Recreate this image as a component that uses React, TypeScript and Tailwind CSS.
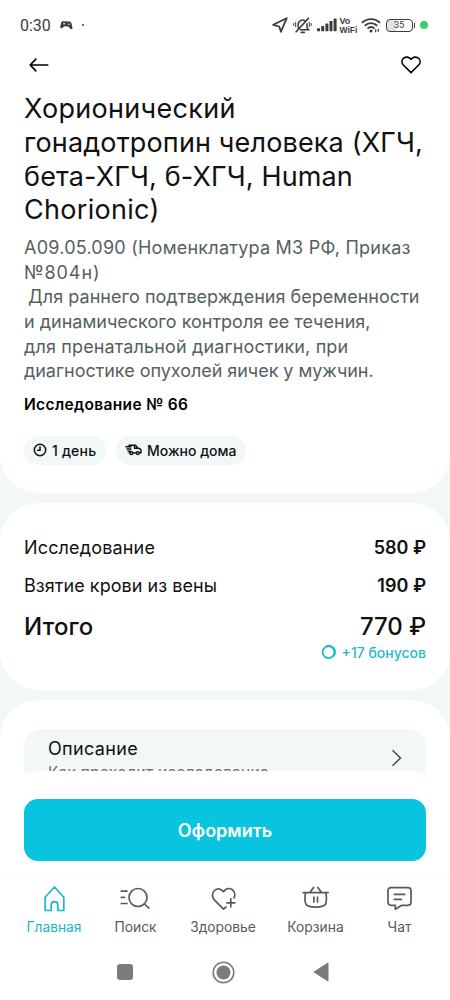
import React from 'react';
import clsx from 'clsx';

const titleLines = [
  { text: 'Хорионический', track: 'tracking-[0.3px]' },
  { text: 'гонадотропин человека (ХГЧ,', track: 'tracking-[0.15px]' },
  { text: 'бета-ХГЧ, б-ХГЧ, Human', track: 'tracking-[0.14px]' },
  { text: 'Chorionic)', track: 'tracking-[0.3px]' },
];

const descriptionLines = [
  { text: 'A09.05.090 (Номенклатура МЗ РФ, Приказ', track: 'tracking-[0.23px]' },
  { text: '№804н)', track: 'tracking-[0.9px]' },
  { text: ' Для раннего подтверждения беременности', track: '-ml-px tracking-[0.02px]' },
  { text: 'и динамического контроля ее течения,', track: 'tracking-[0px]' },
  { text: 'для пренатальной диагностики, при', track: 'tracking-[0.14px]' },
  { text: 'диагностике опухолей яичек у мужчин.', track: 'tracking-[-0.04px]' },
];

const prices = [
  { label: 'Исследование', value: '580 ₽', track: 'tracking-[0.16px]' },
  { label: 'Взятие крови из вены', value: '190 ₽', track: 'tracking-[0.05px]' },
];

function StatusBar() {
  return (
    <div className="flex h-[50px] items-center justify-between pl-5 pr-[22px] text-[#3c3c3c]">
      <div className="flex items-center">
        <span className="mt-px font-['Roboto',sans-serif] text-[16px] leading-5">0:30</span>
        <svg className="mb-[1px] ml-[9px]" width="13" height="10" viewBox="0 0 13 10" fill="currentColor">
          <path d="M3.2 1.2 9.3 1.6c1.2.1 1.900.8 2.200 2l1 4.200c.2 1.300-1.300 1.900-2.200 1L8.200 6.600 4.600 6.200 2.200 8C1.200 8.600 0 7.900.2 6.700l.9-4C1.400 1.700 2.100 1.100 3.200 1.200Z" />
          <path d="M3.100 3.700h2M4.100 2.700v2" stroke="#fff" strokeWidth=".7" />
          <circle cx="9" cy="4.2" r=".8" fill="#fff" />
        </svg>
        <span className="ml-[9px] size-[2px] rounded-full bg-current" />
      </div>
      <div className="flex items-center">
        <svg width="16" height="16" viewBox="0 0 16 16" fill="none" stroke="currentColor" strokeWidth="1.8" strokeLinejoin="round">
          <path d="M14.700 1.200 1.200 7.800l6 1.700 1.700 5.300Z" />
        </svg>
        <svg className="ml-[5px]" width="19" height="17" viewBox="0 0 19 17" fill="none" stroke="currentColor" strokeWidth="1.5" strokeLinecap="round">
          <path d="M5.200 11.200V7.400a4.300 4.300 0 0 1 7-3.300M14 6.800v3.900l1.600 2H7.200" />
          <path d="M8.300 15.300h3M15.400 1.300 3.200 14.800" strokeWidth="1.7" />
          <path d="M2.700 5.300v4.400M.8 6.500v2M16.300 5.300v4.400M18.200 6.500v2" strokeWidth="1" />
        </svg>
        <svg className="ml-[5px]" width="20" height="14" viewBox="0 0 20 14" fill="currentColor">
          <rect x="0" y="10.3" width="3" height="3" rx=".6" />
          <rect x="4.2" y="8" width="3" height="5.3" rx=".6" />
          <rect x="8.4" y="5.6" width="3" height="7.7" rx=".6" />
          <rect x="12.5" y="3" width="3" height="10.3" rx=".6" />
          <rect x="16.6" y=".4" width="3" height="12.9" rx=".6" />
        </svg>
        <div className="ml-[3px] flex w-[18px] flex-col gap-px font-['Liberation_Sans',sans-serif] text-[9px] font-bold">
          <span className="h-[8px] leading-[8px]">Vo</span>
          <span className="h-[8px] text-[8.5px] leading-[8px]">WiFi</span>
        </div>
        <svg className="ml-[3px]" width="20" height="15" viewBox="0 0 20 15" fill="none" stroke="currentColor" strokeWidth="1.9">
          <path d="M1 4.700C6.200-.1 13.800-.1 19 4.700M3.800 7.700c3.700-3.300 8.700-3.300 12.400 0M6.500 10.600c2.200-1.900 4.800-1.900 7 0" />
          <circle cx="10" cy="13" r="1.5" fill="currentColor" stroke="none" />
          <path d="M14.700 11.200v3M17.300 10.700v3" strokeWidth="1.2" />
        </svg>
        <div className="ml-[5px] flex h-[13px] w-[27px] items-center justify-center rounded-[4px] border-[1.5px] border-current bg-[linear-gradient(90deg,#e2e2e2_35%,#fff_35%)] font-['Roboto',sans-serif] text-[9.5px] leading-none">
          35
        </div>
        <span className="ml-px h-[5px] w-[1.5px] bg-current" />
        <span className="ml-[5px] size-2 rounded-full bg-[#35d063]" />
      </div>
    </div>
  );
}

function Header() {
  return (
    <div className="flex h-[30px] items-center justify-between pl-[29px] pr-[29px] text-black">
      <svg width="20" height="14" viewBox="0 0 20 14" fill="none" stroke="currentColor" strokeWidth="1.7" strokeLinecap="round" strokeLinejoin="round">
        <path d="M18.700 7H1.200M6.800 1.200 1.200 7l5.600 5.800" />
      </svg>
      <svg width="20" height="18" viewBox="0 0 20 18" fill="none" stroke="currentColor" strokeWidth="1.6" strokeLinejoin="round">
        <path d="M10 16.600 2.300 9C.5 7.100.5 4.300 2.200 2.500c2-2.100 5.800-1.900 7.800.9 2-2.800 5.800-3 7.800-.9 1.700 1.800 1.700 4.600-.1 6.500Z" />
      </svg>
    </div>
  );
}

const navItems = [
  {
    label: 'Главная',
    width: 'w-[54px]',
    active: true,
    icon: (
      <path d="M4.200 26.500V13.200L13.500 3l9.300 10.200v13.300h-6v-5.400c0-2.300-1-3.400-3.300-3.400s-3.300 1.100-3.300 3.400v5.400Z" />
    ),
  },
  {
    label: 'Поиск',
    width: 'w-[43px]',
    icon: (
      <>
        <circle cx="16" cy="13.5" r="9" />
        <path d="m22.500 20 4.400 4.200M-.7 7.200H5M-.7 13.400H2.500M-.7 19.500H5" />
      </>
    ),
  },
  {
    label: 'Здоровье',
    width: 'w-[66px]',
    icon: (
      <>
        <path d="m16 23-2.500 2.200-9-9c-6.200-6.700 3.200-16.300 9-8.500 5.400-7.300 13.800-.6 10.500 6.300" />
        <path d="M16.800 18.800h8M20.800 14.800v8" />
      </>
    ),
  },
  {
    label: 'Корзина',
    width: 'w-[57px] -ml-[2px]',
    icon: (
      <>
        <path d="M1.200 8.600h25M7.800 8.600l3.800-5.100M19.600 8.600l-3.800-5.100M3.500 8.800c-.9 5-.7 8.500.4 11.400 1.700 3.800 17.900 3.800 19.600 0 1.100-2.900 1.300-6.400.4-11.400" />
        <path d="M11.900 13v5M15.500 13v5" />
      </>
    ),
  },
  {
    label: 'Чат',
    width: 'w-[25px] ml-[10px]',
    icon: (
      <>
        <path d="M5 3.600h17c1.800 0 3 1.200 3 3v11.700c0 1.800-1.200 3-3 3h-6.300l-6.400 3.900v-3.900H5c-1.800 0-3-1.200-3-3V6.600c0-1.800 1.200-3 3-3Z" />
        <path d="M8.300 10.400h10.400M8.300 15.400h7" />
      </>
    ),
  },
];

export default function App() {
  return (
    <div className="flex h-[1000px] w-[450px] flex-col overflow-hidden bg-[#f2f7f7] font-['Inter','Noto_Sans',sans-serif] text-[#111]">
      <main className="flex h-[820px] shrink-0 flex-col gap-[10px] overflow-hidden">
        <section className="h-[493px] shrink-0 rounded-b-[38px] bg-white">
          <StatusBar />
          <Header />
          <div className="px-6 pt-[12px]">
            <h1 className="text-[27px] leading-[33.8px]">
              {titleLines.map((line) => (
                <span key={line.text} className="block whitespace-pre">
                  <span className={line.track}>{line.text}</span>
                </span>
              ))}
            </h1>
            <p className="mt-[9px] text-[18px] leading-[24.6px] text-[#556060]">
              {descriptionLines.map((line) => (
                <span key={line.text} className="block whitespace-pre">
                  <span className={line.track}>{line.text}</span>
                </span>
              ))}
            </p>
            <p className="mt-[11px] text-[15.5px] font-semibold leading-5 tracking-[0.35px] text-black">Исследование № 66</p>
            <div className="mt-[21px] flex gap-[10px] text-[14px] font-medium">
              <div className="flex h-[29px] w-[82px] items-center gap-[5px] rounded-full bg-[#f2f7f7] pl-[9px]">
                <svg width="14" height="14" viewBox="0 0 14 14" fill="none" stroke="currentColor" strokeWidth="1.5" strokeLinecap="round">
                  <circle cx="7" cy="7" r="5.7" />
                  <path d="M7 3.700V7.200H4.700" />
                </svg>
                <span className="whitespace-nowrap tracking-[0.2px]">1 день</span>
              </div>
              <div className="flex h-[29px] w-[130px] items-center gap-[5px] rounded-full bg-[#f2f7f7] pl-[9px]">
                <svg width="17" height="12" viewBox="0 0 17 12" fill="none" stroke="currentColor" strokeWidth="1.4" strokeLinecap="round" strokeLinejoin="round">
                  <path d="M1 2.700h5M2 5h4M3 7.300h2.500M4 1.300h6.500l2.500 3c2 .2 3 1 3 2.300v2.200h-1.500M4.200 8.900h.6M8 9h3.300M9.500 1.500v2.800H13" />
                  <circle cx="6.4" cy="9.2" r="1.4" />
                  <circle cx="12.9" cy="9.2" r="1.4" />
                </svg>
                <span className="whitespace-nowrap">Можно дома</span>
              </div>
            </div>
          </div>
        </section>

        <section className="h-[187px] shrink-0 rounded-[38px] bg-white px-6 pt-[25px]">
          {prices.map((row) => (
            <div key={row.label} className="flex h-[38px] items-center justify-between text-[18px]">
              <span className={row.track}>{row.label}</span>
              <span className="font-semibold">{row.value}</span>
            </div>
          ))}
          <div className="flex h-[44px] items-center justify-between pt-px text-[24px] font-medium">
            <span className="tracking-[0.15px]">Итого</span>
            <span className="tracking-[-0.1px]">770 ₽</span>
          </div>
          <div className="flex h-[8px] items-center justify-end gap-[5px] text-[14px] font-medium text-[#1fb9c9]">
            <svg width="16" height="16" viewBox="0 0 16 16" fill="none" stroke="currentColor">
              <circle cx="7.5" cy="8.3" r="5.9" strokeWidth="1.8" />
              <path d="M4.500 2.400A6.500 6.500 0 0 1 12.500 12.500" strokeWidth="1.3" />
            </svg>
            <span>+17 бонусов</span>
          </div>
        </section>

        <section className="h-[140px] shrink-0 rounded-t-[38px] bg-white px-6 pt-[29px]">
          <div className="flex h-[90px] justify-between rounded-t-[18px] bg-[#f2f7f7] pl-6 pr-6">
            <div className="pt-2">
              <div className="text-[18px] leading-6 tracking-[0.35px]">Описание</div>
              <div className="mt-[2px] whitespace-nowrap text-[15.5px] leading-5 tracking-[0.2px] text-[#687272]">Как проходит исследование</div>
            </div>
            <svg className="mt-5" width="11" height="18" viewBox="0 0 11 18" fill="none" stroke="#444c4c" strokeWidth="1.5">
              <path d="m1.500 1.200 8 7.800-8 7.800" />
            </svg>
          </div>
        </section>
      </main>

      <footer className="relative -mt-[49.5px] h-[229.5px] shrink-0 rounded-t-[38px] bg-white pt-[28.5px]">
        <div className="px-6">
          <button className="h-[62px] w-full rounded-[14px] bg-[#08c4de] pt-px text-[18px] font-semibold text-white">Оформить</button>
        </div>
        <nav className="mt-[14px] flex h-[65px] items-start gap-[33px] border-t border-[#f7f9f9] pl-[27px] pt-[8px] text-[#525c5c]">
          {navItems.map((item) => (
            <div key={item.label} className={clsx('flex shrink-0 flex-col items-center', item.width, item.active && 'text-[#1db5c8]')}>
              <svg className="shrink-0 overflow-visible" width="27" height="27" viewBox="0 0 27 27" fill="none" stroke="currentColor" strokeWidth="1.7" strokeLinecap="round" strokeLinejoin="round">
                {item.icon}
              </svg>
              <span className="mt-[6px] whitespace-nowrap text-[13.8px] leading-5">{item.label}</span>
            </div>
          ))}
        </nav>
        <div className="flex h-[64px] items-center pl-[117px] text-[#7b7b7b]">
          <span className="size-[16px] rounded-[3px] bg-current" />
          <svg className="ml-[79px]" width="23" height="23" viewBox="0 0 23 23" fill="none" stroke="currentColor">
            <circle cx="11.5" cy="11.5" r="10.3" strokeWidth="1.6" />
            <circle cx="11.5" cy="11.5" r="7" fill="currentColor" stroke="none" />
          </svg>
          <svg className="ml-[78px]" width="16" height="20" viewBox="0 0 16 20" fill="currentColor" stroke="currentColor" strokeLinejoin="round">
            <path d="M15 1v18L1 10Z" />
          </svg>
        </div>
      </footer>
    </div>
  );
}
